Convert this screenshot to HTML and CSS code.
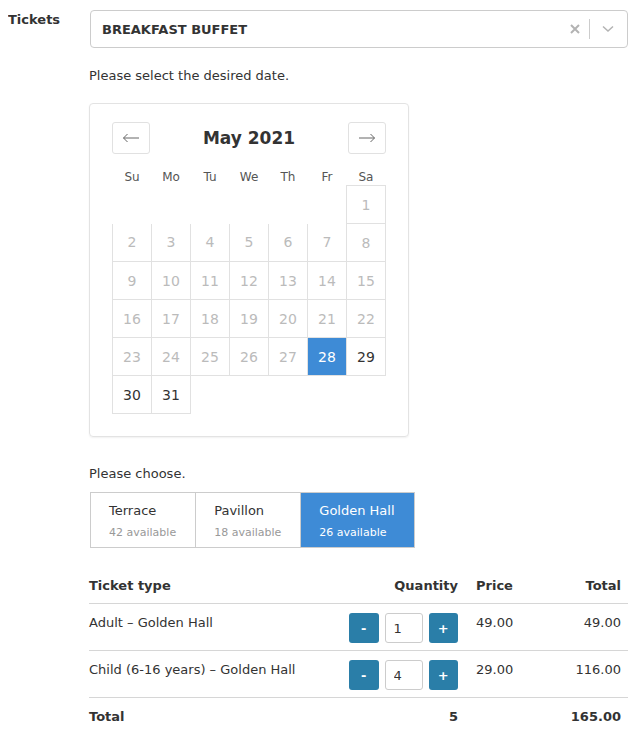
FILE: index.html
```html
<!DOCTYPE html>
<html lang="en">
<head>
    <meta charset="UTF-8">
    <title>Tickets</title>
    <link rel="stylesheet" href="styles.css">
</head>
<body>
    <div class="form-row">
        <label class="form-label">Tickets</label>
        <div class="form-field">
            <!-- Ticket select -->
            <div class="select-box">
                <span class="select-value">BREAKFAST BUFFET</span>
                <span class="select-clear">
                    <svg width="10" height="10" viewBox="0 0 10 10"><path d="M1 1 L9 9 M9 1 L1 9" stroke="#b3b3b3" stroke-width="2"/></svg>
                </span>
                <span class="select-sep"></span>
                <span class="select-arrow">
                    <svg width="12" height="8" viewBox="0 0 12 8"><path d="M1 1.5 L6 6 L11 1.5" fill="none" stroke="#b3b3b3" stroke-width="1.5"/></svg>
                </span>
            </div>

            <p class="hint">Please select the desired date.</p>

            <!-- Calendar -->
            <div class="calendar">
                <div class="cal-nav">
                    <button class="nav-btn">
                        <svg width="18" height="10" viewBox="0 0 18 10"><path d="M17 5 H1.5 M5.5 1 L1.5 5 L5.5 9" fill="none" stroke="#666" stroke-width="1"/></svg>
                    </button>
                    <span class="cal-title">May 2021</span>
                    <button class="nav-btn">
                        <svg width="18" height="10" viewBox="0 0 18 10"><path d="M1 5 H16.5 M12.5 1 L16.5 5 L12.5 9" fill="none" stroke="#666" stroke-width="1"/></svg>
                    </button>
                </div>
                <table class="cal-grid">
                    <thead>
                        <tr><th>Su</th><th>Mo</th><th>Tu</th><th>We</th><th>Th</th><th>Fr</th><th>Sa</th></tr>
                    </thead>
                    <tbody>
                        <tr>
                            <td class="empty"></td><td class="empty"></td><td class="empty"></td><td class="empty"></td><td class="empty"></td><td class="empty"></td>
                            <td class="day off top">1</td>
                        </tr>
                        <tr>
                            <td class="day off">2</td><td class="day off">3</td><td class="day off">4</td><td class="day off">5</td><td class="day off">6</td><td class="day off">7</td><td class="day off">8</td>
                        </tr>
                        <tr>
                            <td class="day off">9</td><td class="day off">10</td><td class="day off">11</td><td class="day off">12</td><td class="day off">13</td><td class="day off">14</td><td class="day off">15</td>
                        </tr>
                        <tr>
                            <td class="day off">16</td><td class="day off">17</td><td class="day off">18</td><td class="day off">19</td><td class="day off">20</td><td class="day off">21</td><td class="day off">22</td>
                        </tr>
                        <tr>
                            <td class="day off">23</td><td class="day off">24</td><td class="day off">25</td><td class="day off">26</td><td class="day off">27</td><td class="day selected">28</td><td class="day">29</td>
                        </tr>
                        <tr>
                            <td class="day">30</td><td class="day">31</td>
                            <td class="empty"></td><td class="empty"></td><td class="empty"></td><td class="empty"></td><td class="empty"></td>
                        </tr>
                    </tbody>
                </table>
            </div>

            <p class="hint choose">Please choose.</p>

            <!-- Area options -->
            <div class="options">
                <div class="option">
                    <div class="option-name">Terrace</div>
                    <div class="option-count">42 available</div>
                </div>
                <div class="option">
                    <div class="option-name">Pavillon</div>
                    <div class="option-count">18 available</div>
                </div>
                <div class="option active">
                    <div class="option-name">Golden Hall</div>
                    <div class="option-count">26 available</div>
                </div>
            </div>

            <!-- Ticket table -->
            <table class="tickets">
                <colgroup>
                    <col class="c-type"><col class="c-qty"><col class="c-price"><col class="c-total">
                </colgroup>
                <thead>
                    <tr>
                        <th class="col-type">Ticket type</th>
                        <th class="col-qty">Quantity</th>
                        <th class="col-price">Price</th>
                        <th class="col-total">Total</th>
                    </tr>
                </thead>
                <tbody>
                    <tr>
                        <td class="col-type">Adult – Golden Hall</td>
                        <td class="col-qty">
                            <div class="qty">
                                <button class="qty-btn">-</button>
                                <input class="qty-input" type="text" value="1">
                                <button class="qty-btn">+</button>
                            </div>
                        </td>
                        <td class="col-price">49.00</td>
                        <td class="col-total">49.00</td>
                    </tr>
                    <tr>
                        <td class="col-type">Child (6-16 years) – Golden Hall</td>
                        <td class="col-qty">
                            <div class="qty">
                                <button class="qty-btn">-</button>
                                <input class="qty-input" type="text" value="4">
                                <button class="qty-btn">+</button>
                            </div>
                        </td>
                        <td class="col-price">29.00</td>
                        <td class="col-total">116.00</td>
                    </tr>
                </tbody>
                <tfoot>
                    <tr>
                        <td class="col-type">Total</td>
                        <td class="col-qty">5</td>
                        <td class="col-price"></td>
                        <td class="col-total">165.00</td>
                    </tr>
                </tfoot>
            </table>
        </div>
    </div>
</body>
</html>
```

FILE: styles.css
```css
/* base */
body {
    margin: 8px 10px 8px 8px;
    font-family: "DejaVu Sans", Verdana, sans-serif;
    font-size: 13px;
    line-height: 20px;
    color: #333;
    background: #fff;
}

.form-row {
    display: flex;
}

.form-label {
    width: 81px;
    flex-shrink: 0;
    font-weight: bold;
    padding-top: 2px;
}

.form-field {
    flex: 1;
    min-width: 0;
}

/* select */
.select-box {
    display: flex;
    align-items: center;
    height: 36px;
    margin: 2px 0 0 1px;
    border: 1px solid #ccc;
    border-radius: 4px;
    padding-left: 11px;
}

.select-value {
    flex: 1;
    font-weight: bold;
    padding-top: 1px;
}

.select-clear {
    display: flex;
    width: 20px;
    justify-content: center;
}

.select-sep {
    width: 1px;
    height: 20px;
    background: #ccc;
    margin: 0 5px 0 4px;
}

.select-arrow {
    display: flex;
    width: 26px;
    justify-content: center;
    margin-right: 6px;
}

.hint {
    margin: 18px 0 17px;
}

.hint.choose {
    margin: 27px 0 8px;
}

/* calendar */
.calendar {
    width: 274px;
    padding: 18px 22px 22px;
    border: 1px solid #e3e3e3;
    border-radius: 4px;
    box-shadow: 0 1px 2px rgba(0, 0, 0, 0.06);
}

.cal-nav {
    display: flex;
    align-items: center;
    justify-content: space-between;
    margin-bottom: 12px;
}

.nav-btn {
    width: 38px;
    height: 32px;
    padding: 0;
    background: #fff;
    border: 1px solid #e1e1e1;
    border-radius: 3px;
    display: flex;
    align-items: center;
    justify-content: center;
}

.cal-title {
    font-size: 17px;
    font-weight: bold;
}

.cal-grid {
    border-collapse: collapse;
    table-layout: fixed;
    width: 274px;
}

.cal-grid th {
    font-size: 12px;
    font-weight: normal;
    color: #555;
    line-height: 15px;
    padding: 4px 0 0;
}

.cal-grid td {
    height: 37px;
    padding: 0;
    text-align: center;
    font-size: 14px;
}

.cal-grid .day {
    border: 1px solid #e1e1e1;
    border-top: none;
    color: #333;
}

.cal-grid .day.top {
    border-top: 1px solid #e1e1e1;
}

.cal-grid .day.off {
    color: #bbb;
}

.cal-grid .day.selected {
    background: #3e8bd6;
    color: #fff;
}

/* options */
.options {
    display: flex;
    width: fit-content;
    margin-left: 1px;
    border: 1px solid #ccc;
}

.option {
    padding: 8px 19px 6px 18px;
    border-left: 1px solid #ccc;
}

.option:first-child {
    border-left: none;
}

.option-name {
    line-height: 20px;
}

.option-count {
    font-size: 11px;
    line-height: 16px;
    color: #999;
    margin-top: 4px;
}

.option.active {
    background: #3e8bd6;
    color: #fff;
}

.option.active .option-count {
    color: #fff;
}

/* tickets table */
.tickets {
    width: 100%;
    margin-top: 19px;
    border-collapse: collapse;
    table-layout: fixed;
}

.c-type { width: 253px; }
.c-qty { width: 123px; }
.c-price { width: 70px; }

.tickets th,
.tickets td {
    padding: 9px 7px 7px;
    vertical-align: top;
    text-align: left;
}

.tickets th {
    font-weight: bold;
}

.tickets tbody td,
.tickets tfoot td {
    border-top: 1px solid #d6d6d6;
}

.tickets tfoot td {
    font-weight: bold;
}

.tickets .col-type {
    padding-left: 0;
}

.tickets .col-qty {
    text-align: right;
}

.tickets .col-price {
    padding-left: 11px;
}

.tickets .col-total {
    text-align: right;
}

.qty {
    display: flex;
    justify-content: flex-end;
    gap: 6px;
}

.qty-btn {
    width: 30px;
    height: 30px;
    padding: 0;
    border: none;
    border-radius: 3px;
    background: #2a7ea8;
    color: #fff;
    font-family: "DejaVu Sans", Verdana, sans-serif;
    font-size: 13px;
    font-weight: bold;
}

.qty-input {
    width: 38px;
    height: 30px;
    box-sizing: border-box;
    padding: 0 8px;
    border: 1px solid #ccc;
    border-radius: 3px;
    font-family: "DejaVu Sans", Verdana, sans-serif;
    font-size: 13px;
    color: #333;
}
```
